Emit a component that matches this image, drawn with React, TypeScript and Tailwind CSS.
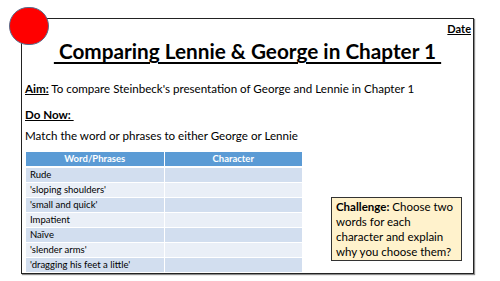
import React from 'react';

const rows = [
  'Rude',
  "'sloping shoulders'",
  "'small and quick'",
  'Impatient',
  'Naïve',
  "'slender arms'",
  "'dragging his feet a little'",
];

export default function App() {
  return (
    <div className="w-[500px] h-[281px] bg-white pl-[21px] pt-[18px] font-['Lato','Liberation_Sans',sans-serif] text-black">
      <div className="relative w-[453px] h-[256px] border border-[#222] shadow-[1px_1px_1px_rgba(0,0,0,0.45)] flex flex-col">
        {/* red dot in the corner */}
        <div className="absolute left-[-13px] top-[-12px] w-[40px] h-[38px] rounded-full bg-[#ff0000] border border-[#5a6b8a]" />

        <div className="flex justify-end pr-[2px] pt-[3px] leading-[13px]">
          <span className="text-[11px] font-bold underline">Date</span>
        </div>

        <h1 className="text-center text-[20.75px] font-bold leading-[26px] mt-[3px] underline underline-offset-[3px] whitespace-pre">
          {' Comparing Lennie & George in Chapter 1 '}
        </h1>

        <div className="pl-[3px] text-[11.6px] leading-[16px] mt-[17px]">
          <p>
            <span className="font-bold underline">Aim:</span> To compare Steinbeck's presentation of George and Lennie in Chapter 1
          </p>
          <p className="mt-[10px] font-bold underline whitespace-pre">{'Do Now: '}</p>
          <p className="mt-[5px]">Match the word or phrases to either George or Lennie</p>
        </div>

        <div className="flex items-end mt-auto">
          <table className="ml-[4px] w-[276px] border-collapse text-[9.5px] leading-[14px]">
            <thead>
              <tr className="bg-[#5b9bd5] text-white">
                <th className="h-[14px] w-[138px] font-bold text-center border-r border-white border-b-2">Word/Phrases</th>
                <th className="h-[14px] font-bold text-center border-b-2 border-white">Character</th>
              </tr>
            </thead>
            <tbody>
              {rows.map((r, i) => (
                <tr key={i} className={i % 2 === 0 ? 'bg-[#d2deef]' : 'bg-[#eaeff7]'}>
                  <td className="h-[15px] pl-[4px] border-r border-b border-white">{r}</td>
                  <td className="h-[15px] border-b border-white" />
                </tr>
              ))}
            </tbody>
          </table>

          <div className="ml-[29px] mb-[12px] w-[131px] h-[64px] bg-[#fff2cc] border border-[#333] px-[4px] pt-[1px] text-[11.5px] leading-[15px]">
            <span className="font-bold">Challenge:</span> Choose two words for each character and explain why you choose them?
          </div>
        </div>
      </div>
    </div>
  );
}
